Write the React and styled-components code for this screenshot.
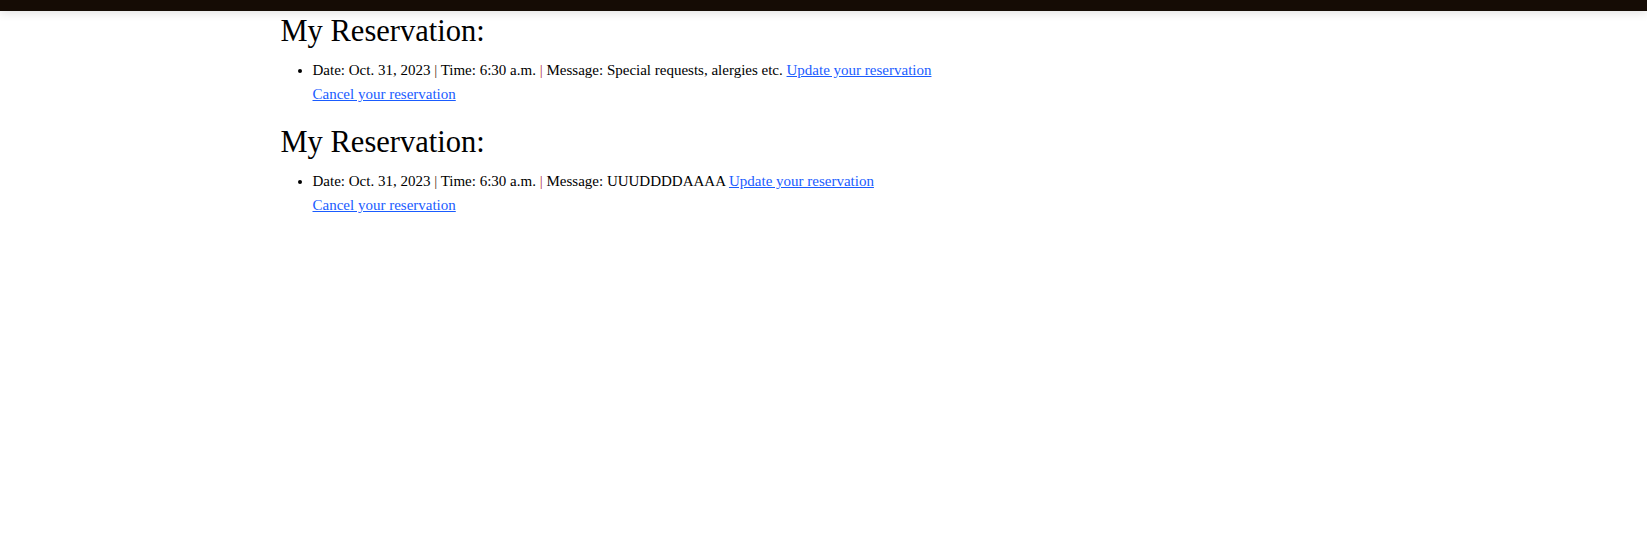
import React from 'react';
import styled, { createGlobalStyle } from 'styled-components';

const GlobalStyle = createGlobalStyle`
  body {
    margin: 0;
    background: #fff;
    font-family: "Liberation Serif", "DejaVu Serif", serif;
    color: #000;
  }
`;

const TopBar = styled.header`
  height: 11px;
  background: #150c05;
  box-shadow: 0 2px 10px rgba(0, 0, 0, 0.12);
`;

const Container = styled.main`
  max-width: 1086px;
  margin: 0 auto;
`;

const Section = styled.section`
  margin-bottom: 4px;
`;

const Heading = styled.h2`
  margin: 2px 0 0;
  font-size: 30.5px;
  font-weight: 400;
  line-height: 36px;
`;

const List = styled.ul`
  margin: 9px 0 18px;
  padding-left: 32px;
  font-size: 15px;
  line-height: 24px;
`;

const Sep = styled.span`
  color: ${(p) => p.$color};
`;

const Link = styled.a`
  color: #1a5cff;
  text-decoration: underline;
`;

const reservations = [
  { id: 1, date: 'Oct. 31, 2023', time: '6:30 a.m.', message: 'Special requests, alergies etc.' },
  { id: 2, date: 'Oct. 31, 2023', time: '6:30 a.m.', message: 'UUUDDDDAAAA' },
];

const App = () => (
  <>
    <GlobalStyle />
    <TopBar />
    <Container>
      {reservations.map((r) => (
        <Section key={r.id}>
          <Heading>My Reservation:</Heading>
          <List>
            <li>
              Date: {r.date} <Sep $color="#4a3214">|</Sep> Time: {r.time}{' '}
              <Sep $color="#b0303a">|</Sep> Message: {r.message}{' '}
              <Link href="#">Update your reservation</Link>
              <br />
              <Link href="#">Cancel your reservation</Link>
            </li>
          </List>
        </Section>
      ))}
    </Container>
  </>
);

export default App;
